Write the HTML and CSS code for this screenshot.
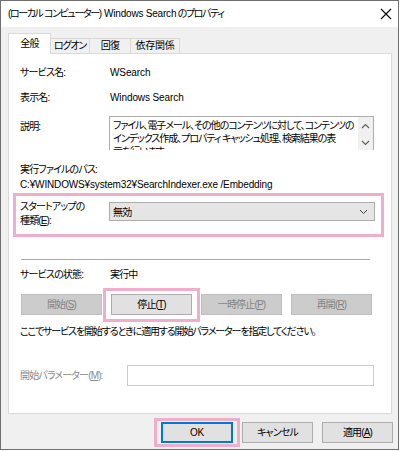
FILE: index.html
```html
<!DOCTYPE html>
<html lang="ja">
<head>
<meta charset="utf-8">
<title>Windows Search のプロパティ</title>
<link rel="stylesheet" href="styles.css">
</head>
<body>
<div class="window">
  <div class="titlebar">
    <span class="title">(ローカル コンピューター) <span class="en">Windows Search</span> のプロパティ</span>
    <svg class="close" width="12" height="12" viewBox="0 0 12 12"><path d="M1 1 L11 11 M11 1 L1 11" stroke="#000" stroke-width="1.1" fill="none"/></svg>
  </div>
  <div class="content">
    <div class="tabs">
      <div class="tab active">全般</div>
      <div class="tab">ログオン</div>
      <div class="tab">回復</div>
      <div class="tab">依存関係</div>
    </div>
    <div class="panel">
      <div class="field r1"><span class="lbl">サービス名:</span><span class="en">WSearch</span></div>
      <div class="field r2"><span class="lbl">表示名:</span><span class="en">Windows Search</span></div>
      <div class="descrow">
        <span class="lbl">説明:</span>
        <div class="textarea">
          <div class="tatext">
            <div>ファイル、電子メール、その他のコンテンツに対して、コンテンツの</div>
            <div>インデックス作成、プロパティ キャッシュ処理、検索結果の表</div>
            <div>示を行います</div>
          </div>
          <div class="vscroll">
            <svg width="9" height="6" viewBox="0 0 9 6"><path d="M1 5 L4.5 1.5 L8 5" stroke="#606060" stroke-width="1.2" fill="none"/></svg>
            <svg width="9" height="6" viewBox="0 0 9 6"><path d="M1 1 L4.5 4.5 L8 1" stroke="#606060" stroke-width="1.2" fill="none"/></svg>
          </div>
        </div>
      </div>
      <div class="line r4">実行ファイルのパス:</div>
      <div class="line en path">C:¥WINDOWS¥system32¥SearchIndexer.exe /Embedding</div>
      <div class="startup">
        <div class="slbl">スタートアップの<br>種類(<u>E</u>):</div>
        <div class="select"><span>無効</span>
          <svg width="9" height="6" viewBox="0 0 9 6"><path d="M1 1 L4.5 4.5 L8 1" stroke="#404040" stroke-width="1" fill="none"/></svg>
        </div>
      </div>
      <div class="sep"></div>
      <div class="field r6"><span class="lbl">サービスの状態:</span><span>実行中</span></div>
      <div class="btnrow">
        <div class="btn disabled">開始(<u>S</u>)</div>
        <div class="btn hl hl-stop">停止(<u>T</u>)</div>
        <div class="btn disabled">一時停止(<u>P</u>)</div>
        <div class="btn disabled">再開(<u>R</u>)</div>
      </div>
      <div class="line r8">ここでサービスを開始するときに適用する開始パラメーターを指定してください。</div>
      <div class="paramrow">
        <span class="plbl">開始パラメーター(<u>M</u>):</span>
        <div class="input"></div>
      </div>
    </div>
    <div class="footer">
      <div class="btn fbtn default hl hl-ok"><span class="en">OK</span></div>
      <div class="btn fbtn w71">キャンセル</div>
      <div class="btn fbtn w71">適用(<u>A</u>)</div>
    </div>
  </div>
</div>
</body>
</html>
```
FILE: styles.css
```css
* { box-sizing: border-box; }
html, body { margin: 0; padding: 0; background: #fff; }
body {
  font-family: "Liberation Sans", "Noto Sans CJK JP", sans-serif;
  font-size: 10px;
  letter-spacing: -0.85px;
  color: #000;
  font-feature-settings: "palt";
}
.en { font-size: 10px; letter-spacing: -0.1px; }
.path { letter-spacing: -0.15px; }
u { text-decoration: underline; text-underline-offset: 1px; }

.window {
  width: 399px;
  height: 450px;
  border: 1px solid #707070;
  background: #f0f0f0;
  display: flex;
  flex-direction: column;
}
.titlebar {
  height: 26px;
  flex: none;
  background: #fff;
  display: flex;
  align-items: center;
  justify-content: space-between;
  padding: 0 6px 0 7px;
}
.title { line-height: 16px; white-space: nowrap; letter-spacing: -1.4px; }
.title .en { letter-spacing: -0.2px; margin-left: 2px; }

.content { padding: 6px 0 0 7px; }

.tabs { display: flex; align-items: flex-end; height: 20px; }
.tab {
  height: 15px;
  border: 1px solid #d9d9d9;
  border-bottom: none;
  margin-left: -1px;
  display: flex;
  align-items: center;
  justify-content: center;
  line-height: 14px;
  background: #f0f0f0;
  white-space: nowrap;
}
.tab:nth-child(2) { width: 40px; letter-spacing: -1.2px; }
.tab:nth-child(3) { width: 42px; }
.tab:nth-child(4) { width: 50px; letter-spacing: -0.2px; }
.tab.active {
  margin-left: 0;
  width: 43px;
  height: 21px;
  background: #fff;
  margin-bottom: -1px;
  position: relative;
  z-index: 1;
  padding-bottom: 1px;
}

.panel {
  width: 384px;
  height: 361px;
  border: 1px solid #d9d9d9;
  background: #fff;
  padding: 11px 0 0 11px;
}
.field { display: flex; height: 16px; line-height: 16px; white-space: nowrap; }
.field .lbl { width: 90px; flex: none; }
.r2 { margin-top: 9px; }

.descrow { display: flex; margin-top: 10px; height: 34px; }
.descrow .lbl { width: 89px; flex: none; padding-top: 3px; line-height: 16px; }
.textarea {
  width: 265px;
  height: 34px;
  border: 1px solid #abadb3;
  border-bottom: none;
  display: flex;
  overflow: hidden;
}
.tatext {
  flex: 1;
  padding: 2px 0 0 3px;
  line-height: 13px;
  white-space: nowrap;
  overflow: hidden;
  letter-spacing: -1.05px;
}
.vscroll {
  width: 15px;
  flex: none;
  background: #f0f0f0;
  display: flex;
  flex-direction: column;
  align-items: center;
  padding-top: 6px;
  gap: 11px;
}

.line { line-height: 15px; white-space: nowrap; }
.r4 { margin-top: 12px; }

.startup {
  margin-top: 1px;
  margin-left: -7px;
  width: 371px;
  height: 44px;
  border: 3px solid #f1aecb;
  display: flex;
  padding: 4px 0 0 4px;
}
.slbl { width: 89px; flex: none; line-height: 14px; white-space: nowrap; }
.select {
  margin-top: 2px;
  width: 266px;
  height: 19px;
  border: 1px solid #adadad;
  background: #e5e5e5;
  display: flex;
  align-items: center;
  justify-content: space-between;
  padding: 0 6px 0 3px;
}

.sep { margin-top: 22px; width: 349px; height: 1px; background: #a9a9a9; margin-left: 1px; }
.r6 { margin-top: 7px; }

.btnrow { display: flex; gap: 9px; margin-top: 11px; margin-left: 1px; }
.btn {
  height: 21px;
  width: 81px;
  border: 1px solid #adadad;
  background: #e1e1e1;
  display: flex;
  align-items: center;
  justify-content: center;
  line-height: 14px;
  white-space: nowrap;
}
.btn.disabled { background: #cccccc; border-color: #bfbfbf; color: #838383; }
.hl { position: relative; }
.hl::after {
  content: "";
  position: absolute;
  border: 3px solid #f1aecb;
}
.hl-stop::after { left: -9px; right: -9px; top: -7px; bottom: -8px; }
.hl-ok::after { left: -9px; right: -9px; top: -6px; bottom: -6px; }

.r8 { margin-top: 9px; line-height: 16px; letter-spacing: -1.15px; }

.paramrow { display: flex; margin-top: 25px; height: 21px; }
.plbl { width: 107px; flex: none; line-height: 21px; color: #8a8a8a; white-space: nowrap; }
.input { width: 247px; height: 21px; border: 1px solid #cccccc; background: #fff; }

.footer {
  display: flex;
  justify-content: flex-end;
  gap: 9px;
  margin-top: 8px;
  padding-right: 5px;
}
.fbtn { width: 72px; }
.fbtn.w71 { width: 71px; }
.btn.default { border: 2px solid #0078d7; }
```
